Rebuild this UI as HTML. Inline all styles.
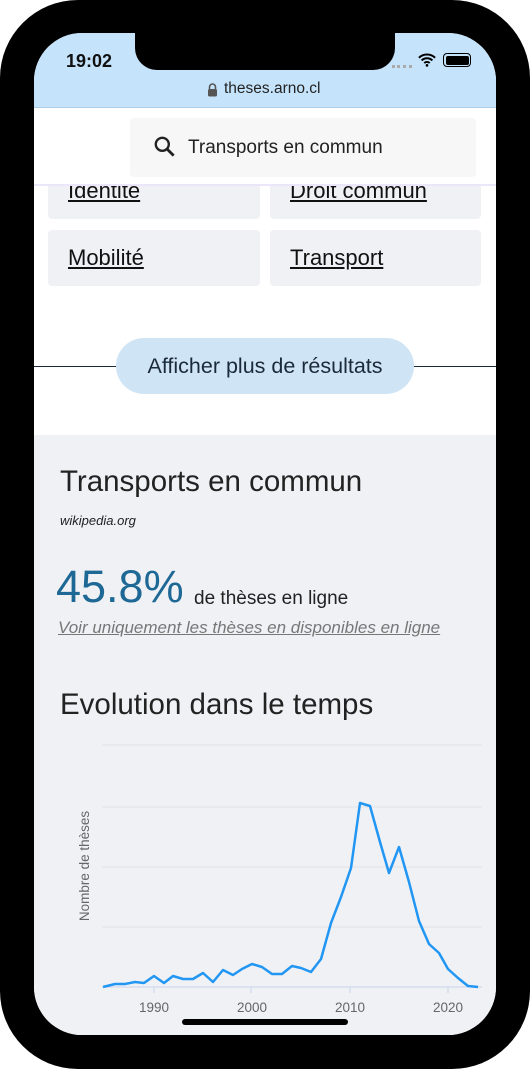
<!DOCTYPE html>
<html><head><meta charset="utf-8"><style>
*{margin:0;padding:0;box-sizing:border-box}
body{width:530px;height:1069px;background:#fff;position:relative;overflow:hidden;font-family:"Liberation Sans",sans-serif;color:#222}
.phone{position:absolute;left:0;top:0;width:530px;height:1069px;background:#000;border-radius:78px}
.screen{position:absolute;left:34px;top:33px;width:462px;height:1002px;background:#fff;border-radius:48px;overflow:hidden}
.a{position:absolute}
.tag{position:absolute;background:#f0f1f5;border-radius:4px;font-size:22px;color:#111;text-decoration:underline;padding-left:20px}
</style></head><body>
<div class="phone"></div>
<div class="screen">
 <div class="a" style="left:0;top:0;width:462px;height:75px;background:#c5e4fc;border-bottom:1px solid #a9cde8"></div>
 <div class="a" style="left:101px;top:-5px;width:260px;height:42px;background:#000;border-radius:0 0 22px 22px"></div>
 <div class="a" style="left:32px;top:18px;font-size:18px;font-weight:bold;color:#111">19:02</div>
 <div class="a" style="left:358px;top:32px;width:20px;height:3px;border-top:3px dotted #aaa"></div>
 <svg class="a" style="left:384px;top:20px" width="18" height="14" viewBox="0 0 20 15"><path d="M1 5a13 13 0 0 1 18 0M4 8a8.5 8.5 0 0 1 12 0M7 11a4 4 0 0 1 6 0" stroke="#000" stroke-width="2.2" fill="none"/><circle cx="10" cy="13.5" r="1.5"/></svg>
 <div class="a" style="left:409px;top:20px;width:28px;height:14px;border:1.5px solid #000;border-radius:4px;padding:1.5px"><div style="width:100%;height:100%;background:#000;border-radius:2px"></div></div>
 <svg class="a" style="left:173px;top:50px" width="11" height="14" viewBox="0 0 11 14"><path d="M2.5 6V4a3 3 0 0 1 6 0v2" stroke="#555" stroke-width="1.6" fill="none"/><rect x="1" y="6" width="9" height="7.5" rx="1.5" fill="#555"/></svg>
 <div class="a" style="left:190px;top:47px;font-size:15.5px;color:#222">theses.arno.cl</div>

 <div class="tag" style="left:14px;top:140px;width:212px;height:46px;line-height:36px">Identité</div>
 <div class="tag" style="left:236px;top:140px;width:211px;height:46px;line-height:36px">Droit commun</div>
 <div class="a" style="left:0;top:76px;width:462px;height:77px;background:#fff;border-bottom:2px solid #ece6fb"></div>
 <div class="a" style="left:96px;top:85px;width:346px;height:59px;background:#f7f7f7;border-radius:4px"></div>
 <svg class="a" style="left:118px;top:101px" width="26" height="26" viewBox="0 0 24 24"><circle cx="9.5" cy="9.5" r="6" stroke="#222" stroke-width="2.2" fill="none"/><path d="M14 14l6 6" stroke="#222" stroke-width="2.6"/></svg>
 <div class="a" style="left:154px;top:104px;font-size:19px;color:#222">Transports en commun</div>

 <div class="tag" style="left:14px;top:197px;width:212px;height:56px;line-height:56px">Mobilité</div>
 <div class="tag" style="left:236px;top:197px;width:211px;height:56px;line-height:56px">Transport</div>

 <div class="a" style="left:0;top:333px;width:462px;height:1px;background:#1a2a3a"></div>
 <div class="a" style="left:82px;top:305px;width:298px;height:56px;background:#cfe4f5;border-radius:28px;text-align:center;line-height:56px;font-size:21.5px;color:#1a2a3a">Afficher plus de résultats</div>

 <div class="a" style="left:0;top:402px;width:462px;height:600px;background:#f0f1f5"></div>
 <div class="a" style="left:26px;top:432px;font-size:29.5px;color:#222">Transports en commun</div>
 <div class="a" style="left:26px;top:480px;font-size:13px;font-style:italic;color:#222">wikipedia.org</div>
 <div class="a" style="left:22px;top:528px;font-size:45px;color:#1d6894">45.8%</div>
 <div class="a" style="left:160px;top:555px;font-size:19px;color:#222">de thèses en ligne</div>
 <div class="a" style="left:24px;top:585px;font-size:17px;font-style:italic;color:#777;text-decoration:underline">Voir uniquement les thèses en disponibles en ligne</div>
 <div class="a" style="left:26px;top:655px;font-size:29.5px;color:#222">Evolution dans le temps</div>

 <svg class="a" style="left:0;top:0" width="462" height="1002" viewBox="34 33 462 1002">
  <g stroke="#e2e3e8" stroke-width="1"><path d="M102 745H482M102 807H482M102 867H482M102 927H482"/></g>
  <path d="M102 987H482" stroke="#c9d4ec" stroke-width="1"/>
  <g stroke="#c9d4ec"><path d="M154 987v6M251 987v6M350 987v6M448 987v6"/></g>
  <g font-family="Liberation Sans, sans-serif" font-size="13.5" fill="#666" text-anchor="middle">
   <text x="154" y="1012">1990</text><text x="252" y="1012">2000</text><text x="350" y="1012">2010</text><text x="448" y="1012">2020</text>
   <text transform="translate(89 866) rotate(-90)" font-size="13.5">Nombre de thèses</text>
  </g>
  <polyline fill="none" stroke="#2196f3" stroke-width="2.5" stroke-linejoin="round" points="103,987 115,984 125,984 135,982 144,983 154,976 164,983 173,976 183,979 193,979 203,973 213,982 223,970 233,975 242,969 252,964 262,967 272,974 282,974 292,966 301,968 311,972 321,959 331,923 341,897 351,868 360,803 370,806 380,842 389,873 399,847 409,882 419,921 429,944 439,953 448,969 458,978 468,986 478,987"/>
 </svg>
 <div class="a" style="left:148px;top:986px;width:166px;height:6px;background:#000;border-radius:3px"></div>
</div>
</body></html>
